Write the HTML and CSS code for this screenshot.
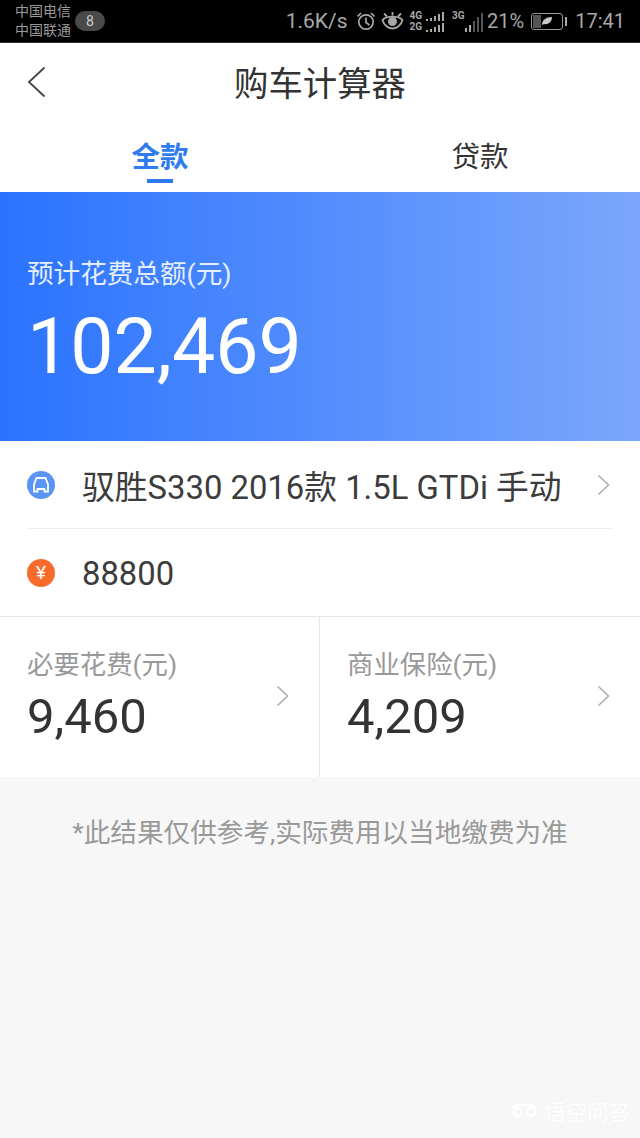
FILE: index.html
```html
<!DOCTYPE html>
<html>
  <head>
    <meta charset="UTF-8">
    <title>购车计算器</title>
    <link rel="stylesheet" href="styles.css">
  </head>
  <body>
    <div id="container">
      <!-- Status bar -->
      <div class="status">
        <div class="carriers"><span>中国电信</span><span>中国联通</span></div>
        <div class="badge">8</div>
        <div class="status-right">
          <span class="speed">1.6K/s</span>
          <svg class="st-icon alarm" width="20" height="20" viewBox="0 0 20 20" fill="none" stroke="#a8a8a8" stroke-width="1.700">
            <circle cx="10" cy="11" r="7.200"/>
            <path d="M10 6.500V11.500L13.500 14M1.500 5.500L5 2M18.500 5.500L15 2"/>
          </svg>
          <svg class="st-icon eye" width="23" height="20" viewBox="0 0 23 20" fill="none" stroke="#a8a8a8" stroke-width="1.800">
            <path d="M1.500 9C5.500 4.500 17.500 4.500 21.500 9C20 15 15 17.500 11.500 17.500C8 17.500 3 15 1.500 9Z"/>
            <circle cx="11.500" cy="10.500" r="3.600" fill="#a8a8a8"/>
            <path d="M3 2.500L6 5.500M11.500 1V4.500M20 2.500L17 5.500"/>
          </svg>
          <div class="net">
            <div class="net-row"><span>4G</span><i class="b1"></i><i class="b2"></i><i class="b3"></i><i class="b4"></i><i class="b5"></i></div>
            <div class="net-row"><span>2G</span><i class="b1"></i><i class="b2"></i><i class="b3"></i><i class="b4"></i><i class="b5"></i></div>
          </div>
          <div class="signal">
            <span>3G</span>
            <i class="s1"></i><i class="s2"></i><i class="s3"></i><i class="s4"></i><i class="s5"></i>
          </div>
          <span class="pct">21%</span>
          <div class="battery">
            <div class="level"></div>
            <svg width="12" height="10" viewBox="0 0 12 10"><path d="M1 9C1 4 5 1 11 1C11 6 7 9 3 8Z" fill="#c8c8c8"/></svg>
          </div>
          <div class="battery-tip"></div>
          <span class="clock">17:41</span>
        </div>
      </div>

      <!-- Title -->
      <div class="topbar">
        <svg class="back" width="20" height="32" viewBox="0 0 20 32" fill="none" stroke="#444" stroke-width="1.800">
          <path d="M17.500 1.500L2 16L17.500 30.500"/>
        </svg>
        <div class="title">购车计算器</div>
      </div>

      <!-- Tabs -->
      <div class="tabs">
        <div class="tab active">全款</div>
        <div class="tab">贷款</div>
      </div>

      <!-- Blue total -->
      <div class="hero">
        <div class="hero-label">预计花费总额(元)</div>
        <div class="hero-num">102,469</div>
      </div>

      <!-- Rows -->
      <div class="rows">
        <div class="row row-line">
          <div class="dot dot-blue">
            <svg width="20" height="18" viewBox="0 0 20 18" fill="none" stroke="#fff" stroke-width="1.800">
              <path d="M5.500 2H14.500L17 8.500V15.500H13.500V13H6.500V15.500H3V8.500Z"/>
            </svg>
          </div>
          <div class="row-text">驭胜S330 2016款 1.5L GTDi 手动</div>
          <svg class="chev" width="13" height="22" viewBox="0 0 13 22" fill="none" stroke="#aaa" stroke-width="1.500"><path d="M1.500 1.500L11.500 11L1.500 20.500"/></svg>
        </div>
        <div class="row row-last">
          <div class="dot dot-orange">¥</div>
          <div class="row-text">88800</div>
        </div>
      </div>

      <!-- Two cost cells -->
      <div class="costs">
        <div class="cost cost-left">
          <div>
            <div class="cost-label">必要花费(元)</div>
            <div class="cost-num">9,460</div>
          </div>
          <svg class="chev cost-chev" width="13" height="22" viewBox="0 0 13 22" fill="none" stroke="#aaa" stroke-width="1.500"><path d="M1.500 1.500L11.500 11L1.500 20.500"/></svg>
        </div>
        <div class="cost">
          <div>
            <div class="cost-label">商业保险(元)</div>
            <div class="cost-num">4,209</div>
          </div>
          <svg class="chev cost-chev" width="13" height="22" viewBox="0 0 13 22" fill="none" stroke="#aaa" stroke-width="1.500"><path d="M1.500 1.500L11.500 11L1.500 20.500"/></svg>
        </div>
      </div>

      <!-- Footer note -->
      <div class="note-area">
        <div class="note">*此结果仅供参考,实际费用以当地缴费为准</div>
        <div class="mark">
          <svg width="27" height="16" viewBox="0 0 27 16" fill="none" stroke="#ffffff" stroke-width="2.500">
            <circle cx="7" cy="9" r="4"/><circle cx="20" cy="9" r="4"/><path d="M1 4C8 1 19 1 26 4"/>
          </svg>
          <span>悟空问答</span>
        </div>
      </div>
    </div>
  </body>
</html>
```

FILE: styles.css
```css
/* Reset default margins and paddings for all elements */
* {
  box-sizing: border-box;
  margin: 0;
  padding: 0;
}

html, body {
  width: 640px;
  height: 1138px;
  overflow: hidden;
  background-color: #f7f7f7;
  font-family: "Roboto", "Noto Sans CJK SC", sans-serif;
}

#container {
  display: flex;
  flex-direction: column;
  width: 640px;
  height: 1138px;
}

/* Status bar */
.status {
  display: flex;
  align-items: center;
  height: 43px;
  padding: 0 15px;
  background-color: #000000;
  border-bottom: 1px solid #333;
  color: #a8a8a8;
}

.carriers {
  display: flex;
  flex-direction: column;
  font-size: 14px;
  line-height: 19px;
  color: #9a9a9a;
}

.badge {
  width: 30px;
  height: 20px;
  margin-left: 4px;
  border-radius: 10px;
  background-color: #4a4a4a;
  color: #cfcfcf;
  font-size: 14px;
  line-height: 20px;
  text-align: center;
}

.status-right {
  display: flex;
  align-items: center;
  margin-left: auto;
}

.speed {
  font-size: 21px;
  margin-right: 9px;
}

.alarm {
  margin-right: 5px;
}

.eye {
  margin-right: 5px;
}

.net {
  display: flex;
  flex-direction: column;
  gap: 1px;
  margin-right: 8px;
}

.net-row {
  display: flex;
  align-items: flex-end;
  gap: 2px;
  height: 10px;
}

.net-row span {
  font-size: 10px;
  line-height: 10px;
  font-weight: 700;
  margin-right: 2px;
}

.net-row i {
  display: block;
  width: 2px;
  background-color: #a8a8a8;
}

.b1 { height: 2px; }
.b2 { height: 3px; }
.b3 { height: 5px; }
.b4 { height: 7px; }
.b5 { height: 9px; }

.signal {
  display: flex;
  align-items: flex-end;
  gap: 2px;
  height: 22px;
  margin-right: 4px;
  position: relative;
  padding-left: 13px;
}

.signal span {
  position: absolute;
  left: 0;
  top: 1px;
  font-size: 10px;
  line-height: 10px;
  font-weight: 700;
}

.signal i {
  display: block;
  width: 2px;
  background-color: #555;
}

.s1 { height: 4px; background-color: #a8a8a8 !important; }
.s2 { height: 7px; background-color: #a8a8a8 !important; }
.s3 { height: 11px; }
.s4 { height: 15px; }
.s5 { height: 19px; }

.pct {
  font-size: 20px;
  margin-right: 7px;
}

.battery {
  position: relative;
  display: flex;
  align-items: center;
  justify-content: center;
  width: 32px;
  height: 17px;
  border: 1px solid #999;
  border-radius: 3px;
}

.battery .level {
  position: absolute;
  left: 1px;
  top: 1px;
  bottom: 1px;
  width: 8px;
  background-color: #555;
}

.battery svg {
  position: relative;
}

.battery-tip {
  width: 2px;
  height: 9px;
  margin-left: 2px;
  margin-right: 8px;
  background-color: #a8a8a8;
}

.clock {
  font-size: 20px;
}

/* Title bar */
.topbar {
  display: flex;
  align-items: center;
  justify-content: center;
  position: relative;
  height: 81px;
  background-color: #ffffff;
}

.back {
  position: absolute;
  left: 27px;
  top: 23px;
}

.title {
  font-size: 34.400px;
  line-height: 48px;
  color: #333;
}

/* Tabs */
.tabs {
  display: flex;
  height: 68px;
  background-color: #ffffff;
}

.tab {
  position: relative;
  width: 320px;
  padding-top: 13px;
  font-size: 28.500px;
  line-height: 42px;
  color: #333;
  text-align: center;
}

.active {
  color: #2f7cf0;
  font-weight: 700;
}

.active::after {
  content: "";
  position: absolute;
  left: 147px;
  top: 55px;
  width: 26px;
  height: 4px;
  background-color: #2f7cf0;
}

/* Blue total panel */
.hero {
  height: 249px;
  padding: 64px 27px 0;
  background: linear-gradient(90deg, #2a73ff 0%, #7ba7fb 100%);
  color: #ffffff;
}

.hero-label {
  font-size: 26.600px;
  line-height: 36px;
  color: #e4eeff;
}

.hero-num {
  margin-top: 9px;
  font-size: 77px;
  line-height: 92px;
}

/* List rows */
.rows {
  padding-left: 27px;
  background-color: #ffffff;
  border-bottom: 1px solid #e6e6e6;
}

.row {
  display: flex;
  align-items: center;
  height: 88px;
  padding-right: 30px;
}

.row-last {
  height: 87px;
}

.row-last .row-text {
  padding-top: 2px;
}

.row-line {
  margin-right: 27px;
  padding-right: 3px;
  border-bottom: 1px solid #eeeeee;
}

.dot {
  flex: none;
  display: flex;
  align-items: center;
  justify-content: center;
  width: 28px;
  height: 28px;
  border-radius: 50%;
  color: #ffffff;
  font-size: 19px;
}

.dot-blue {
  background-color: #5a94f5;
}

.dot-orange {
  background-color: #f76b2c;
}

.row-text {
  flex: 1;
  margin-left: 27px;
  font-size: 32.800px;
  color: #3c3c3c;
  white-space: nowrap;
}

/* Cost cells */
.costs {
  display: flex;
  height: 160px;
  background-color: #ffffff;
}

.cost {
  display: flex;
  align-items: center;
  justify-content: space-between;
  width: 320px;
  padding: 2px 30px 0 27px;
}

.cost-left {
  border-right: 1px solid #e6e6e6;
}

.cost-chev {
  margin-top: -4px;
}

.cost-label {
  font-size: 26.400px;
  line-height: 32px;
  color: #999;
}

.cost-num {
  margin-top: 6px;
  font-size: 49px;
  line-height: 60px;
  color: #333;
}

/* Footer note */
.note-area {
  position: relative;
  flex: 1;
  background-color: #f7f7f7;
}

.note {
  padding-top: 36px;
  font-size: 26.600px;
  line-height: 40px;
  color: #999;
  text-align: center;
}

/* Faint watermark in the corner */
.mark {
  position: absolute;
  right: 10px;
  bottom: 12px;
  display: flex;
  align-items: center;
  gap: 6px;
  color: #ffffff;
  font-size: 21.500px;
  text-shadow: 0 0 2px #f0f0f0;
}
```
